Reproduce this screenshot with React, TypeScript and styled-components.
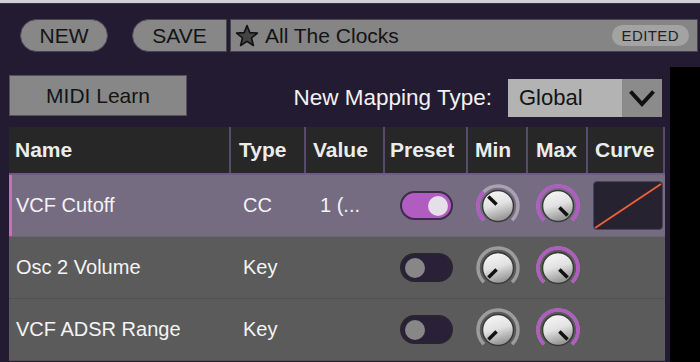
import React from "react";
import styled, { createGlobalStyle } from "styled-components";

const GlobalStyle = createGlobalStyle`
  html, body {
    margin: 0;
    padding: 0;
    background: #231b32;
  }
  body {
    font-family: "Liberation Sans", Arial, sans-serif;
  }
`;

const purple = "#b05cc0";

const Screen = styled.div`
  width: 700px;
  height: 362px;
  overflow: hidden;
  display: flex;
  flex-direction: column;
  background: #231b32;
`;

const TopStrip = styled.div`
  height: 3px;
  flex-shrink: 0;
  background: #d2d1d6;
  border-bottom: 1px solid #3a3346;
`;

const Toolbar = styled.div`
  height: 63px;
  flex-shrink: 0;
  display: flex;
  flex-direction: row;
  align-items: flex-start;
  padding: 15px 2px 0 20px;
  box-sizing: border-box;
`;

const PillButton = styled.button<{ $half?: boolean }>`
  height: 33px;
  width: ${p => (p.$half ? 95 : 88)}px;
  margin-right: ${p => (p.$half ? 3 : 24)}px;
  border: 1px solid #4a4452;
  border-radius: ${p => (p.$half ? "17px 0 0 17px" : "17px")};
  background: #878787;
  color: #141414;
  font-family: inherit;
  font-size: 21px;
  padding: 0;
  flex-shrink: 0;
`;

const PresetField = styled.div`
  flex-grow: 1;
  height: 33px;
  display: flex;
  flex-direction: row;
  align-items: center;
  background: #858585;
  border: 1px solid #4a4452;
  box-sizing: border-box;
  padding: 0 8px 0 4px;
  color: #141414;
  font-size: 21px;
`;

const PresetName = styled.span`
  flex-grow: 1;
  margin-left: 6px;
`;

const EditedTag = styled.span`
  font-size: 15px;
  color: #222;
  background: #a3a3a3;
  border-radius: 11px;
  height: 21px;
  line-height: 21px;
  padding: 0 10px;
  letter-spacing: 0.4px;
`;

const Lower = styled.div`
  flex-grow: 1;
  display: flex;
  flex-direction: row;
`;

const Panel = styled.div`
  width: 670px;
  padding: 8px 5px 0 9px;
  box-sizing: border-box;
  display: flex;
  flex-direction: column;
`;

const SidePanel = styled.div`
  flex-grow: 1;
  background: #000;
`;

const ControlsRow = styled.div`
  display: flex;
  flex-direction: row;
  align-items: flex-start;
  height: 52px;
`;

const LearnButton = styled.button`
  width: 178px;
  height: 41px;
  background: #878787;
  border: 1px solid #55505c;
  color: #141414;
  font-family: inherit;
  font-size: 21px;
  padding: 0;
`;

const MappingLabel = styled.span`
  margin-left: auto;
  margin-top: 10px;
  margin-right: 16px;
  color: #f2f2f2;
  font-size: 22.5px;
`;

const Dropdown = styled.div`
  margin-top: 4px;
  margin-right: 3px;
  width: 154px;
  height: 38px;
  display: flex;
  flex-direction: row;
`;

const DropdownValue = styled.div`
  flex-grow: 1;
  background: #b3b3b3;
  color: #141414;
  font-size: 22px;
  display: flex;
  align-items: center;
  padding-left: 11px;
`;

const DropdownArrow = styled.div`
  width: 40px;
  background: #8b8b8b;
  display: flex;
  align-items: center;
  justify-content: center;
`;

const cols = "222px 75px 79px 83px 60px 60px 77px";

const Table = styled.div`
  width: 656px;
  display: flex;
  flex-direction: column;
`;

const HeaderRow = styled.div`
  display: grid;
  grid-template-columns: ${cols};
  height: 46px;
  background: #272727;
  border-bottom: 2px solid #6c5c86;
`;

const HeaderCell = styled.div<{ $pad: number }>`
  display: flex;
  align-items: center;
  padding-left: ${p => p.$pad}px;
  color: #ececec;
  font-weight: bold;
  font-size: 21px;
  white-space: nowrap;
  border-right: 2px solid #574a6b;
  box-sizing: border-box;
`;

const Row = styled.div<{ $selected?: boolean }>`
  display: grid;
  grid-template-columns: ${cols};
  height: 61px;
  background: ${p => (p.$selected ? "#756c82" : "#5b5b5b")};
  border-bottom: 1px solid ${p => (p.$selected ? "#6a6275" : "#515151")};
  box-shadow: ${p => (p.$selected ? "inset 3px 0 0 #d06cbc" : "none")};
  color: #f4f4f4;
  font-size: 20px;
`;

const TextCell = styled.div<{ $pad: number }>`
  display: flex;
  align-items: center;
  padding-left: ${p => p.$pad}px;
  white-space: nowrap;
`;

const CenterCell = styled.div`
  display: flex;
  align-items: center;
  justify-content: center;
`;

const ToggleTrack = styled.div<{ $on: boolean }>`
  width: 53px;
  height: 29px;
  border-radius: 15px;
  box-sizing: border-box;
  border: 2px solid ${p => (p.$on ? "#3b2c48" : "#2a2430")};
  background: ${p => (p.$on ? purple : "#2a2138")};
  display: flex;
  align-items: center;
  justify-content: ${p => (p.$on ? "flex-end" : "flex-start")};
  padding: 0 3px;
`;

const ToggleThumb = styled.div<{ $on: boolean }>`
  width: 20px;
  height: 20px;
  border-radius: 50%;
  background: ${p => (p.$on ? "#e4dfe8" : "#878787")};
`;

const CurveBox = styled.div`
  width: 70px;
  height: 49px;
  margin-left: 3px;
  background: #26222f;
  border: 1px solid #4b4559;
  border-radius: 4px;
  box-sizing: border-box;
  overflow: hidden;
`;

const Toggle = ({ on }: { on: boolean }) => (
  <ToggleTrack $on={on}>
    <ToggleThumb $on={on} />
  </ToggleTrack>
);

const polar = (cx: number, cy: number, r: number, deg: number) => {
  const a = (deg * Math.PI) / 180;
  return [cx + r * Math.sin(a), cy - r * Math.cos(a)];
};

const arc = (r: number, from: number, to: number) => {
  const [x1, y1] = polar(23, 23, r, from);
  const [x2, y2] = polar(23, 23, r, to);
  const large = to - from > 180 ? 1 : 0;
  return `M ${x1} ${y1} A ${r} ${r} 0 ${large} 1 ${x2} ${y2}`;
};

// value 0..1 maps to -135..135 degrees
const Knob = ({ value, id, rest }: { value: number; id: string; rest: string }) => {
  const angle = -135 + value * 270;
  const [px1, py1] = polar(23, 23, 2, angle);
  const [px2, py2] = polar(23, 23, 13.5, angle);
  return (
    <svg width="46" height="46" viewBox="0 0 46 46">
      <defs>
        <linearGradient id={id} x1="0" y1="0" x2="0.3" y2="1">
          <stop offset="0" stopColor="#fafafa" />
          <stop offset="0.55" stopColor="#e2e2e2" />
          <stop offset="1" stopColor="#9a9a9a" />
        </linearGradient>
      </defs>
      <path d={arc(20, -135, 135)} stroke={rest} strokeWidth="3.5" fill="none" />
      {value > 0.01 && (
        <path d={arc(20, -135, angle)} stroke={purple} strokeWidth="3.5" fill="none" />
      )}
      <circle cx="23" cy="23" r="15.5" fill={`url(#${id})`} stroke="#3a3a3a" strokeWidth="1.5" />
      <line x1={px1} y1={py1} x2={px2} y2={py2} stroke="#111" strokeWidth="3.5" />
    </svg>
  );
};

type Mapping = {
  name: string;
  type: string;
  value: string;
  preset: boolean;
  min: number;
  max: number;
  curve: boolean;
};

const mappings: Mapping[] = [
  { name: "VCF Cutoff", type: "CC", value: "1 (...", preset: true, min: 0.33, max: 1, curve: true },
  { name: "Osc 2 Volume", type: "Key", value: "", preset: false, min: 0, max: 1, curve: false },
  { name: "VCF ADSR Range", type: "Key", value: "", preset: false, min: 0, max: 1, curve: false },
];

const headers: [string, number][] = [
  ["Name", 6],
  ["Type", 8],
  ["Value", 7],
  ["Preset", 5],
  ["Min", 7],
  ["Max", 8],
  ["Curve", 7],
];

export default function App() {
  return (
    <Screen>
      <GlobalStyle />
      <TopStrip />
      <Toolbar>
        <PillButton>NEW</PillButton>
        <PillButton $half>SAVE</PillButton>
        <PresetField>
          <svg width="24" height="24" viewBox="0 0 24 24">
            <path
              d="M12 1.5 L14.8 8.6 L22.4 9.1 L16.5 14 L18.4 21.5 L12 17.4 L5.6 21.5 L7.5 14 L1.6 9.1 L9.2 8.6 Z"
              fill="#444"
              stroke="#111"
              strokeWidth="1.6"
              strokeLinejoin="round"
            />
          </svg>
          <PresetName>All The Clocks</PresetName>
          <EditedTag>EDITED</EditedTag>
        </PresetField>
      </Toolbar>
      <Lower>
        <Panel>
          <ControlsRow>
            <LearnButton>MIDI Learn</LearnButton>
            <MappingLabel>New Mapping Type:</MappingLabel>
            <Dropdown>
              <DropdownValue>Global</DropdownValue>
              <DropdownArrow>
                <svg width="28" height="18" viewBox="0 0 28 18">
                  <path d="M2.5 2.5 L14 15 L25.5 2.5" stroke="#111" strokeWidth="4" fill="none" />
                </svg>
              </DropdownArrow>
            </Dropdown>
          </ControlsRow>
          <Table>
            <HeaderRow>
              {headers.map(([h, pad]) => (
                <HeaderCell key={h} $pad={pad}>
                  {h}
                </HeaderCell>
              ))}
            </HeaderRow>
            {mappings.map((m, i) => (
              <Row key={m.name} $selected={i === 0}>
                <TextCell $pad={7}>{m.name}</TextCell>
                <TextCell $pad={12}>{m.type}</TextCell>
                <TextCell $pad={14}>{m.value}</TextCell>
                <CenterCell>
                  <Toggle on={m.preset} />
                </CenterCell>
                <CenterCell>
                  <Knob value={m.min} id={`kmin${i}`} rest={i === 0 ? "#a9a2b2" : "#9c9c9c"} />
                </CenterCell>
                <CenterCell>
                  <Knob value={m.max} id={`kmax${i}`} rest="#9c9c9c" />
                </CenterCell>
                <CenterCell>
                  {m.curve && (
                    <CurveBox>
                      <svg width="68" height="47" viewBox="0 0 68 47">
                        <line x1="1" y1="46" x2="67" y2="2" stroke="#e8603a" strokeWidth="2" />
                      </svg>
                    </CurveBox>
                  )}
                </CenterCell>
              </Row>
            ))}
          </Table>
        </Panel>
        <SidePanel />
      </Lower>
    </Screen>
  );
}
